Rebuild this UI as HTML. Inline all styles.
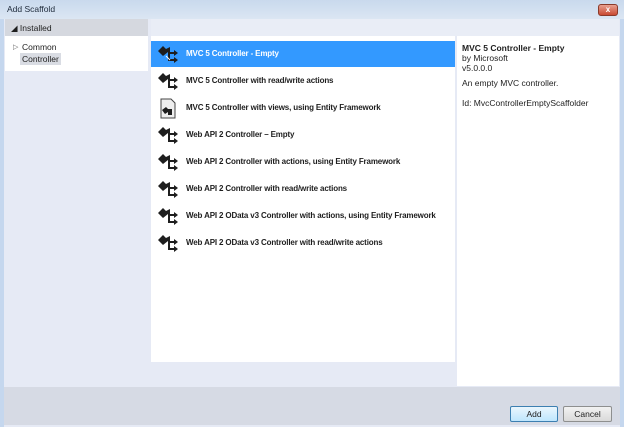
<!DOCTYPE html>
<html><head><style>
*{margin:0;padding:0;box-sizing:border-box}
body{width:624px;height:427px;overflow:hidden;font-family:"Liberation Sans",sans-serif;font-size:8.5px;color:#1e1e1e;background:#e6eaf5;position:relative}
.title{position:absolute;left:0;top:0;width:624px;height:19px;background:linear-gradient(#c9d9ed,#dbe6f3);}
.title span{position:absolute;left:7px;top:4px;font-size:8.5px;color:#1e2a3a}
.close{position:absolute;left:598px;top:4px;width:20px;height:12px;background:linear-gradient(#e8a090,#c94a32);border:1px solid #8a3a2a;border-radius:3px;color:#fff;font-size:8px;text-align:center;line-height:10px;font-weight:bold}
.lb{position:absolute;left:0;top:19px;width:4px;height:408px;background:#c5d7ee}
.rb{position:absolute;right:0;top:19px;width:4px;height:408px;background:#c5d7ee}
.hdr{position:absolute;left:5px;top:19px;width:143px;height:17px;background:#d5d8df}
.hdr span{position:absolute;left:6px;top:4px}
.topstrip{position:absolute;left:151px;top:19px;width:468px;height:17px;background:#e9edf6}
.tree{position:absolute;left:5px;top:36px;width:143px;height:35px;background:#fff}
.mid{position:absolute;left:151px;top:36px;width:304px;height:326px;background:#fff}
.right{position:absolute;left:457px;top:36px;width:162px;height:350px;background:#fff;padding:7px 5px;line-height:10px}
.foot{position:absolute;left:4px;top:387px;width:616px;height:38px;background:#d6dae4}
.row{position:absolute;left:0;width:304px;height:26px;font-weight:bold;font-size:8px;letter-spacing:-0.15px;white-space:nowrap}
.row.sel{background:#3399ff;color:#fff}
.row span{position:absolute;left:35px;top:8px}
.row svg{position:absolute;left:6px;top:3px}
.btn{position:absolute;top:406px;height:16px;border:1px solid #7f9db9;border-radius:2px;text-align:center;line-height:14px;font-size:8.5px}
</style></head><body>
<div class="title"><span>Add Scaffold</span><div class="close">x</div></div>
<div class="lb"></div><div class="rb"></div>
<div class="hdr"><span>◢ Installed</span></div>
<div class="topstrip"></div>
<div class="tree">
<div style="position:absolute;left:8px;top:7px;font-size:7px;color:#666">▷</div>
<div style="position:absolute;left:17px;top:6px">Common</div>
<div style="position:absolute;left:15px;top:17px;background:#d9dce3;padding:1px 2px">Controller</div>
</div>
<div class="mid">
<div class="row sel" style="top:5px"><svg width="22" height="20" viewBox="0 0 22 20"><path d="M1 7 L6 2 L9 5 L13 3 L13 8 L17 8 L17 6 L21 9 L17 12 L17 10 L13 10 L13 15 L17 15 L17 13 L21 16 L17 19 L17 17 L11 17 L11 8 L6 12 Z" fill="#1e1e1e"/><path d="M9 12 l4 4" stroke="#fff" stroke-width="1"/></svg><span>MVC 5 Controller - Empty</span></div>
<div class="row" style="top:32px"><svg width="22" height="20" viewBox="0 0 22 20"><path d="M1 7 L6 2 L9 5 L13 3 L13 8 L17 8 L17 6 L21 9 L17 12 L17 10 L13 10 L13 15 L17 15 L17 13 L21 16 L17 19 L17 17 L11 17 L11 8 L6 12 Z" fill="#1e1e1e"/></svg><span>MVC 5 Controller with read/write actions</span></div>
<div class="row" style="top:59px"><svg width="22" height="22" viewBox="0 0 22 22"><path d="M4 1 H14 L18 5 V20 H4 Z" fill="#eee" stroke="#444"/><path d="M5 12 L9 9 L11 11 L15 11 L15 17 L11 17 L11 14 L8 16 Z" fill="#1e1e1e"/></svg><span>MVC 5 Controller with views, using Entity Framework</span></div>
<div class="row" style="top:86px"><svg width="22" height="20" viewBox="0 0 22 20"><path d="M1 7 L6 2 L9 5 L13 3 L13 8 L17 8 L17 6 L21 9 L17 12 L17 10 L13 10 L13 15 L17 15 L17 13 L21 16 L17 19 L17 17 L11 17 L11 8 L6 12 Z" fill="#1e1e1e"/></svg><span>Web API 2 Controller – Empty</span></div>
<div class="row" style="top:113px"><svg width="22" height="20" viewBox="0 0 22 20"><path d="M1 7 L6 2 L9 5 L13 3 L13 8 L17 8 L17 6 L21 9 L17 12 L17 10 L13 10 L13 15 L17 15 L17 13 L21 16 L17 19 L17 17 L11 17 L11 8 L6 12 Z" fill="#1e1e1e"/></svg><span>Web API 2 Controller with actions, using Entity Framework</span></div>
<div class="row" style="top:140px"><svg width="22" height="20" viewBox="0 0 22 20"><path d="M1 7 L6 2 L9 5 L13 3 L13 8 L17 8 L17 6 L21 9 L17 12 L17 10 L13 10 L13 15 L17 15 L17 13 L21 16 L17 19 L17 17 L11 17 L11 8 L6 12 Z" fill="#1e1e1e"/></svg><span>Web API 2 Controller with read/write actions</span></div>
<div class="row" style="top:167px"><svg width="22" height="20" viewBox="0 0 22 20"><path d="M1 7 L6 2 L9 5 L13 3 L13 8 L17 8 L17 6 L21 9 L17 12 L17 10 L13 10 L13 15 L17 15 L17 13 L21 16 L17 19 L17 17 L11 17 L11 8 L6 12 Z" fill="#1e1e1e"/></svg><span>Web API 2 OData v3 Controller with actions, using Entity Framework</span></div>
<div class="row" style="top:194px"><svg width="22" height="20" viewBox="0 0 22 20"><path d="M1 7 L6 2 L9 5 L13 3 L13 8 L17 8 L17 6 L21 9 L17 12 L17 10 L13 10 L13 15 L17 15 L17 13 L21 16 L17 19 L17 17 L11 17 L11 8 L6 12 Z" fill="#1e1e1e"/></svg><span>Web API 2 OData v3 Controller with read/write actions</span></div>
</div>
<div class="right">
<div style="font-weight:bold">MVC 5 Controller - Empty</div>
<div>by Microsoft</div>
<div>v5.0.0.0</div>
<div style="margin-top:5px">An empty MVC controller.</div>
<div style="margin-top:10px">Id: MvcControllerEmptyScaffolder</div>
</div>
<div class="foot"></div>
<div class="btn" style="left:510px;width:48px;background:linear-gradient(#eaf6fd,#bee6fd);border-color:#3c7fb1">Add</div>
<div class="btn" style="left:563px;width:49px;background:linear-gradient(#f2f2f2,#d9d9d9);border-color:#8e8f8f">Cancel</div>
</body></html>
